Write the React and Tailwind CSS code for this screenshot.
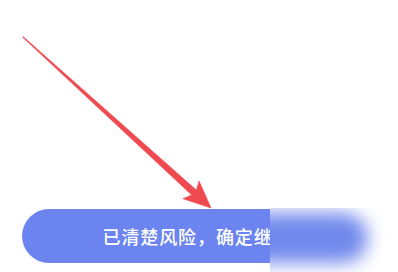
import React from "react";

function Arrow() {
  const S = [23, 37];
  const T = [211, 208];
  const dx = T[0] - S[0];
  const dy = T[1] - S[1];
  const len = Math.hypot(dx, dy);
  const d = [dx / len, dy / len];
  const n = [-d[1], d[0]];
  const headLen = 27;
  const B = [T[0] - headLen * d[0], T[1] - headLen * d[1]];
  const B2 = [B[0] + 4 * d[0], B[1] + 4 * d[1]];
  const p = (base, k) => `${(base[0] + k * n[0]).toFixed(1)},${(base[1] + k * n[1]).toFixed(1)}`;
  const pts = [
    p(S, -0.4),
    p(B2, -3.4),
    p(B, -12),
    `${T[0]},${T[1]}`,
    p(B, 12),
    p(B2, 3.4),
    p(S, 0.4),
  ].join(" ");
  return (
    <svg className="absolute left-0 top-0" width="398" height="272" viewBox="0 0 398 272">
      <polygon points={pts} fill="#f04a50" stroke="#f04a50" strokeWidth="0.6" strokeLinejoin="round" />
    </svg>
  );
}

export default function App() {
  return (
    <div
      className="relative h-[272px] w-[398px] overflow-hidden bg-white"
      style={{ fontFamily: '"Noto Sans CJK SC", "Noto Sans", sans-serif' }}
    >
      <div className="flex h-full flex-col justify-end pb-[9px] pl-[22px]">
        <div className="flex h-[54px] w-[350px] items-center justify-center rounded-full bg-[#6b84f0]">
          <span className="text-[18px] font-medium leading-none tracking-[0.9px] text-white">已清楚风险，确定继续</span>
        </div>
      </div>
      <div className="absolute left-[270px] top-[208px] bottom-0 right-0 overflow-hidden bg-white">
        <div className="absolute -left-[30px] top-[5px] h-[50px] w-[128px] rounded-full bg-[#7189ec] blur-[9px]" />
      </div>
      <Arrow />
    </div>
  );
}
